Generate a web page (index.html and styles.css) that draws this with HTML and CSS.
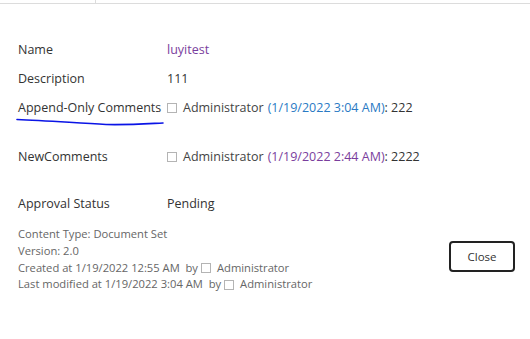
FILE: index.html
```html
<!DOCTYPE html>
<html>
<head>
<meta charset="utf-8">
<link rel="stylesheet" href="styles.css">
</head>
<body>
<div class="topbar"><div class="tab"></div><div class="tab-rest"></div></div>
<div class="content">
  <div class="fields">
    <div class="row"><div class="label">Name</div><div class="value visited">luyitest</div></div>
    <div class="row"><div class="label">Description</div><div class="value">111</div></div>
    <div class="row row-append">
      <div class="label">Append-Only Comments
        <svg class="scribble" width="150" height="10" viewBox="0 0 150 10"><path d="M1 1.5 C 30 2.5, 60 5, 90 6.5 C 115 7, 135 5.5, 147 5" fill="none" stroke="#0a14e6" stroke-width="1.6" stroke-linecap="round"/></svg>
      </div>
      <div class="value"><span class="box"></span><span class="user">Administrator</span> <span class="date">(1/19/2022 3:04 AM)</span>: 222</div>
    </div>
    <div class="row row-new"><div class="label">NewComments</div><div class="value"><span class="box"></span><span class="user">Administrator</span> <span class="date visited">(1/19/2022 2:44 AM)</span>: 2222</div></div>
    <div class="row"><div class="label">Approval Status</div><div class="value">Pending</div></div>
  </div>
  <div class="footer">
    <div class="meta">
      <div>Content Type: Document Set</div>
      <div>Version: 2.0</div>
      <div>Created at 1/19/2022 12:55 AM&nbsp; by<span class="box small"></span> Administrator</div>
      <div>Last modified at 1/19/2022 3:04 AM&nbsp; by<span class="box small"></span> Administrator</div>
    </div>
    <button class="close">Close</button>
  </div>
</div>
</body>
</html>
```
FILE: styles.css
```css
* { box-sizing: border-box; }
body {
  margin: 0;
  background: #fff;
  font-family: "Open Sans", "Noto Sans", sans-serif;
  color: #333;
  width: 530px;
  height: 339px;
  overflow: hidden;
}
.topbar {
  display: flex;
  height: 4px;
  border-bottom: 1px solid #dcdcdc;
}
.tab { width: 96px; border-right: 1px solid #dcdcdc; }
.tab-rest { flex: 1; }
.content { padding: 31px 15px 0 18px; }
.fields { display: flex; flex-direction: column; }
.row {
  display: flex;
  align-items: center;
  height: 29px;
  font-size: 12.5px;
}
.row-append { margin-bottom: 20px; }
.row-new { margin-bottom: 18px; }
.label { width: 149px; color: #333; position: relative; white-space: nowrap; }
.value { color: #333; display: flex; align-items: center; white-space: nowrap; }
.visited { color: #7a3e9d; }
.date { color: #2a7ac4; margin-left: 4px; }
.date.visited { color: #7a3e9d; }
.user { color: #444; }
.box {
  display: inline-block;
  width: 10px;
  height: 10px;
  border: 1px solid #b4b4b4;
  margin-right: 6px;
}
.box.small { margin: 0 6px 0 3px; }
.scribble { position: absolute; left: -2px; top: 19px; }
.footer {
  display: flex;
  align-items: flex-start;
  justify-content: space-between;
  margin-top: 8px;
}
.meta {
  font-size: 11.2px;
  color: #666;
  line-height: 16.8px;
}
.meta div { display: flex; align-items: center; white-space: nowrap; }
.close {
  width: 66px;
  height: 31px;
  border: 2px solid #222;
  border-radius: 4px;
  background: #fff;
  font-family: "Open Sans", "Noto Sans", sans-serif;
  font-size: 11.5px;
  color: #333;
  margin-top: 15px;
}
```
